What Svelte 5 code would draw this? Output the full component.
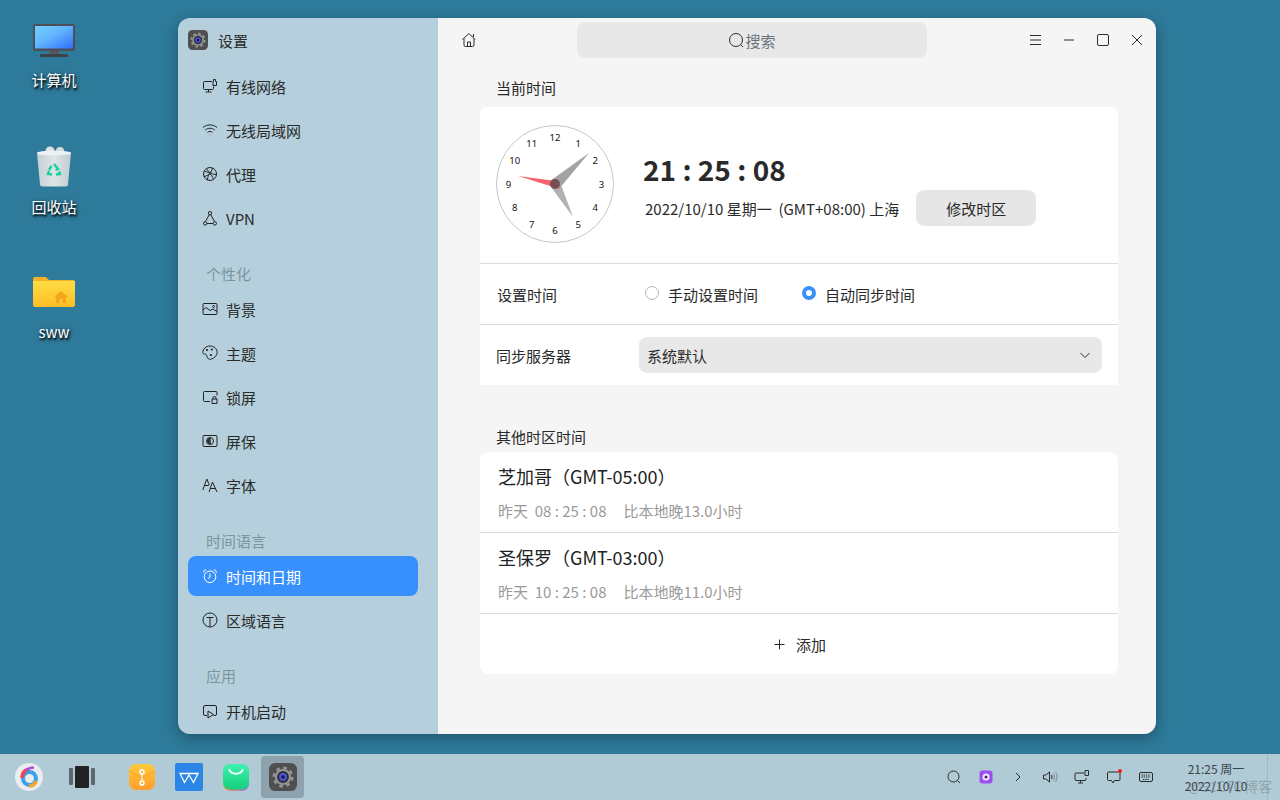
<script>
  const sections = [
    {
      items: [
        { label: "有线网络", icon: "M10 3.500H2.500a1 1 0 0 0-1 1v6a1 1 0 0 0 1 1h8a1 1 0 0 0 1-1V8.500M6.500 11.500V14M3.500 14h6M11.500 3.500V1.500h2v2h1v4h-3.500v-4z" },
        { label: "无线局域网", icon: "M1 5.500c4-3.400 10-3.400 14 0M3.200 8c2.800-2.300 6.800-2.300 9.600 0M5.400 10.300c1.500-1.100 3.700-1.100 5.200 0M8 12.800v.4" },
        { label: "代理", icon: "M8 1.500a6.500 6.500 0 1 0 0 13 6.500 6.500 0 0 0 0-13zM2.500 5.500c3.500 0 7 2 9 8M5 2.500c.5 3 4 6 9.500 6M10.500 2c-1 4-4 8-8.500 8.500M5.500 14c0-3 1-6 4-8" },
        { label: "VPN", icon: "M7.200 4.800L3.500 11.500M8.800 4.800l3.700 6.700M5 13.500h6M8 1.500a1.700 1.700 0 1 0 0 3.400 1.700 1.700 0 0 0 0-3.400zM3.200 11.700a1.700 1.700 0 1 0 0 3.400 1.700 1.700 0 0 0 0-3.400zM12.800 11.700a1.700 1.700 0 1 0 0 3.400 1.700 1.700 0 0 0 0-3.400z" }
      ]
    },
    {
      title: "个性化",
      items: [
        { label: "背景", icon: "M2 2.500h12a1 1 0 0 1 1 1v9a1 1 0 0 1-1 1H2a1 1 0 0 1-1-1v-9a1 1 0 0 1 1-1zM1 9l3-2.500 4 3 3-1.500 4 2.500M11.500 4.500a1 1 0 1 0 0 2 1 1 0 0 0 0-2z" },
        { label: "主题", icon: "M8 1C4 1 .8 4 .8 7.500c0 1.500 1.500 1.500 2.700 1.800 1.500.4 1.200 2 2 3.500.8 1.400 2.500 1.800 4 1.200 3-1 5.700-3.500 5.700-6.500C15.200 3.800 12 1 8 1z", dots: [[5, 5], [9.800, 4.500], [9, 10]] },
        { label: "锁屏", icon: "M15 6.500v-3a1 1 0 0 0-1-1H2.500a1 1 0 0 0-1 1v8a1 1 0 0 0 1 1H8M10 10h5v4.500h-5zM11 10V9a1.500 1.500 0 0 1 3 0v1" },
        { label: "屏保", icon: "M2 2.500h12a1 1 0 0 1 1 1v9a1 1 0 0 1-1 1H2a1 1 0 0 1-1-1v-9a1 1 0 0 1 1-1zM8 4.500a3.500 3.500 0 1 0 0 7 3.500 3.500 0 0 0 0-7zM8 4.500v7M8 5.500a2.500 2.500 0 0 0 0 5zM6.500 6v4" },
        { label: "字体", icon: "M.8 13L4.800 2l2.500 6M2.400 8.500h4.500M7 15l3.500-10 4.500 10M8.300 11.500h5.200" }
      ]
    },
    {
      title: "时间语言",
      items: [
        { label: "时间和日期", active: true, icon: "M8 3a5.800 5.800 0 1 0 0 11.600A5.800 5.800 0 0 0 8 3zM8 5.500V9l-2 1.500M1.800 4.800V3.500a1.500 1.500 0 0 1 1.500-1.500h1M14.200 4.800V3.500A1.500 1.500 0 0 0 12.700 2h-1" },
        { label: "区域语言", icon: "M8 1a7 7 0 1 0 0 14A7 7 0 0 0 8 1zM4.500 5.500h7M8 5.500V15" }
      ]
    },
    {
      title: "应用",
      items: [
        { label: "开机启动", icon: "M5 12.500H3a1.500 1.500 0 0 1-1.500-1.500V4A1.500 1.500 0 0 1 3 2.500h10A1.500 1.500 0 0 1 14.500 4v7a1.500 1.500 0 0 1-1.500 1.500h-1.500M6 8l5.500 3.500L6 15z" }
      ]
    }
  ];

  const clockNumbers = [1, 2, 3, 4, 5, 6, 7, 8, 9, 10, 11, 12].map((n) => {
    const a = (n * Math.PI) / 6;
    return { n, x: 46.5 * Math.sin(a), y: -46.5 * Math.cos(a) };
  });

  const zones = [
    { city: "芝加哥", gmt: "（GMT-05:00）", time: "08 : 25 : 08", diff: "比本地晚13.0小时" },
    { city: "圣保罗", gmt: "（GMT-03:00）", time: "10 : 25 : 08", diff: "比本地晚11.0小时" }
  ];
</script>

{#snippet gearIcon(size)}
  <svg width={size} height={size} viewBox="0 0 20 20">
    <rect width="20" height="20" rx="4.500" fill="#4f4f4f" />
    <circle cx="10" cy="10" r="5.800" fill="#969696" />
    <circle cx="10" cy="10" r="6.600" fill="none" stroke="#969696" stroke-width="1.800" stroke-dasharray="2.600 2.580" />
    <circle cx="10" cy="10" r="4.200" fill="#2d2d3a" />
    <circle cx="10" cy="10" r="2.800" fill="#4c55d8" />
    <circle cx="10" cy="10" r="1.200" fill="#12183f" />
  </svg>
{/snippet}

<div class="desktop">
  <div class="desk-icon computer">
    <svg width="48" height="40" viewBox="0 0 48 40">
      <defs>
        <linearGradient id="scr" x1="0" y1="0" x2="1" y2="1">
          <stop offset="0" stop-color="#6fd0fb" />
          <stop offset="0.45" stop-color="#62b4fd" />
          <stop offset="1" stop-color="#2e6ffd" />
        </linearGradient>
      </defs>
      <rect x="3" y="1" width="42" height="27" rx="2" fill="#4b5058" />
      <rect x="5" y="3" width="38" height="22.500" fill="url(#scr)" />
      <rect x="19" y="28" width="10" height="3" fill="#55585e" />
      <rect x="10" y="31" width="28" height="3" rx="1" fill="#3e4146" />
    </svg>
    <span>计算机</span>
  </div>
  <div class="desk-icon trash">
    <svg width="48" height="44" viewBox="0 0 48 44">
      <defs>
        <linearGradient id="bin" x1="0" y1="0" x2="1" y2="0">
          <stop offset="0" stop-color="#c4d0d5" />
          <stop offset="0.5" stop-color="#dde4e6" />
          <stop offset="1" stop-color="#bfccd1" />
        </linearGradient>
      </defs>
      <circle cx="20" cy="6" r="4.500" fill="#dfe3e4" />
      <circle cx="30" cy="6" r="4" fill="#d4d9da" />
      <path d="M7 7.500h34l-3 32q-.3 2-2 2H12q-1.700 0-2-2z" fill="url(#bin)" />
      <ellipse cx="24" cy="8" rx="17" ry="2.500" fill="#eef1f2" />
      <path d="M24 19l4 5-2.500 1M19 26l-1 3 4 .5M29 26.500l1 2.500-4 .5M21.500 21l-2.500 4" fill="none" stroke="#17d19a" stroke-width="2.400" />
    </svg>
    <span>回收站</span>
  </div>
  <div class="desk-icon home">
    <svg width="48" height="40" viewBox="0 0 48 40">
      <defs>
        <linearGradient id="fold" x1="0" y1="0" x2="0" y2="1">
          <stop offset="0" stop-color="#ffdc45" />
          <stop offset="1" stop-color="#ffbd24" />
        </linearGradient>
      </defs>
      <path d="M3 5q0-2 2-2h11l3 3h24q2 0 2 2v6H3z" fill="#f5b023" />
      <path d="M3 7h42v24q0 2-2 2H5q-2 0-2-2z" fill="url(#fold)" />
      <path d="M24 23l7-6 7 6h-2v6h-3.500v-4h-3v4H26v-6z" fill="#f4a51e" />
    </svg>
    <span>sww</span>
  </div>

  <div class="window">
    <aside class="sidebar">
      <div class="app-head">
        {@render gearIcon(20)}
        <span>设置</span>
      </div>
      {#each sections as section}
        <div class="section">
          {#if section.title}
            <div class="section-title">{section.title}</div>
          {/if}
          {#each section.items as item}
            <div class="nav-item" class:active={item.active}>
              <svg width="16" height="16" viewBox="0 0 16 16">
                <path d={item.icon} />
                {#if item.dots}
                  {#each item.dots as d}
                    <circle class="dot" cx={d[0]} cy={d[1]} r="1.100" />
                  {/each}
                {/if}
              </svg>
              <span>{item.label}</span>
            </div>
          {/each}
        </div>
      {/each}
    </aside>

    <main class="content">
      <header class="titlebar">
        <button class="home-btn" aria-label="主页">
          <svg width="16" height="16" viewBox="0 0 16 16">
            <path d="M1.500 7.500L8 1.500l6 6M3 6.500v6.500a1.500 1.500 0 0 0 1.500 1.500h7A1.500 1.500 0 0 0 13 13V6.500M6.500 14.500V10h3v4.500M12.500 2v3" />
          </svg>
        </button>
        <div class="search">
          <svg width="17" height="17" viewBox="0 0 17 17">
            <path d="M8 1.500a6.500 6.500 0 1 0 0 13 6.500 6.500 0 0 0 0-13zM12.800 12.800L15 15" />
          </svg>
          <span>搜索</span>
        </div>
        <div class="win-buttons">
          <svg width="12" height="12" viewBox="0 0 12 12"><path d="M1 1.500h11M1 6h11M1 10.500h11" /></svg>
          <svg width="12" height="12" viewBox="0 0 12 12"><path d="M1 6h10" /></svg>
          <svg width="12" height="12" viewBox="0 0 12 12"><rect x=".5" y=".5" width="11" height="11" rx="1.500" /></svg>
          <svg width="12" height="12" viewBox="0 0 12 12"><path d="M1 1l10 10M11 1L1 11" /></svg>
        </div>
      </header>

      <div class="scroll">
        <h2>当前时间</h2>
        <section class="card">
          <div class="now">
            <svg class="clock" width="120" height="120" viewBox="-60 -60 120 120">
              <circle r="58.500" fill="#fff" stroke="#c5c5c5" stroke-width="1" />
              {#each clockNumbers as c}
                <text x={c.x} y={c.y + 3.500}>{c.n}</text>
              {/each}
              <path d="M-5 -3 L34 -31 L4 5Z" fill="#8c8c8c" opacity="0.8" />
              <path d="M5 -2 L18 33 L-4 3Z" fill="#a5a5a5" opacity="0.85" />
              <path d="M-37 -8 L-3 -3.500 L5 5Z" fill="#f9525b" opacity="0.9" />
              <circle r="5" fill="#6b4a4c" opacity="0.9" />
            </svg>
            <div class="now-text">
              <div class="big-time">21 : 25 : 08</div>
              <div class="date-row">
                <span>2022/10/10 星期一&nbsp;&nbsp;(GMT+08:00) 上海</span>
                <button class="btn">修改时区</button>
              </div>
            </div>
          </div>
          <div class="row set-row">
            <span class="row-label">设置时间</span>
            <label class="radio"><i></i>手动设置时间</label>
            <label class="radio on"><i></i>自动同步时间</label>
          </div>
          <div class="row server-row">
            <span class="row-label">同步服务器</span>
            <div class="select">
              <span>系统默认</span>
              <svg width="12" height="12" viewBox="0 0 12 12"><path d="M1.500 4l4.500 4.500L10.500 4" /></svg>
            </div>
          </div>
        </section>

        <h2 class="other">其他时区时间</h2>
        <section class="card zones">
          {#each zones as z}
            <div class="zone">
              <div class="zone-name">{z.city}<span class="gmt">{z.gmt}</span></div>
              <div class="zone-info"><span>昨天&nbsp;&nbsp;{z.time}</span><span>{z.diff}</span></div>
            </div>
          {/each}
          <div class="add">
            <svg width="11" height="11" viewBox="0 0 11 11"><path d="M.5 5.500h10M5.500 .5v10" /></svg>
            <span>添加</span>
          </div>
        </section>
      </div>
    </main>
  </div>

  <footer class="taskbar">
    <div class="dock-left">
      <svg class="launcher" width="30" height="30" viewBox="0 0 30 30">
        <circle cx="15" cy="15" r="14" fill="#e9edf0" />
        <circle cx="15.500" cy="16.500" r="6.500" fill="none" stroke="#3da2ec" stroke-width="4" />
        <path d="M8 16c0-5 3-8 7-9" fill="none" stroke="#e8484f" stroke-width="3.500" />
        <path d="M12 9c2-2.500 4-3.500 8-3.500" fill="none" stroke="#a652e0" stroke-width="2.500" />
        <path d="M22 19c-1 4-4 5-7 5" fill="none" stroke="#f6a52d" stroke-width="3.500" />
      </svg>
      <svg class="multi" width="26" height="24" viewBox="0 0 26 24">
        <rect x="0" y="3" width="4" height="17" rx="1" fill="#5e676d" />
        <rect x="6" y="1" width="14" height="22" rx="1" fill="#232323" />
        <rect x="22" y="3" width="4" height="17" rx="1" fill="#5e676d" />
      </svg>
      <div class="dock-apps">
        <div class="dock-app">
          <svg width="28" height="28" viewBox="0 0 28 28">
            <defs>
              <linearGradient id="arch" x1="0" y1="0" x2="0" y2="1">
                <stop offset="0" stop-color="#ffc93a" />
                <stop offset="1" stop-color="#ff9f2c" />
              </linearGradient>
            </defs>
            <rect x="1" y="1" width="26" height="26" rx="7" fill="url(#arch)" />
            <path d="M1 8l13 7 13-7" fill="none" stroke="#f6a02f" stroke-width="1" />
            <path d="M14 6v17" stroke="#fff" stroke-width="1.200" />
            <circle cx="14" cy="9" r="2" fill="#ffb535" stroke="#fff" stroke-width="1.400" />
            <circle cx="14" cy="20" r="2" fill="#ffb535" stroke="#fff" stroke-width="1.400" />
          </svg>
        </div>
        <div class="dock-app">
          <svg width="28" height="28" viewBox="0 0 28 28">
            <rect width="28" height="28" rx="2" fill="#2b86e7" />
            <path d="M5 10.500h18l-4.500 9-4.500-7.500-4.500 7.500z" fill="none" stroke="#fff" stroke-width="1.300" />
          </svg>
        </div>
        <div class="dock-app">
          <svg width="28" height="28" viewBox="0 0 28 28">
            <defs>
              <linearGradient id="shop" x1="0" y1="0" x2="0" y2="1">
                <stop offset="0" stop-color="#3ef2ad" />
                <stop offset="1" stop-color="#15cf7c" />
              </linearGradient>
              <linearGradient id="shop-edge" x1="0" y1="0" x2="1" y2="0">
                <stop offset="0" stop-color="#f0a040" />
                <stop offset="1" stop-color="#9a6cf0" />
              </linearGradient>
            </defs>
            <rect x="1" y="2" width="26" height="26" rx="7" fill="url(#shop-edge)" />
            <rect x="1" y="1" width="26" height="25.500" rx="7" fill="url(#shop)" />
            <path d="M7.500 7c2 5 11 5 13 0" fill="none" stroke="#fff" stroke-width="2" stroke-linecap="round" />
          </svg>
        </div>
        <div class="dock-app current">
          {@render gearIcon(28)}
        </div>
      </div>
    </div>
    <div class="dock-right">
      <div class="tray">
        <svg width="16" height="16" viewBox="0 0 16 16"><path d="M7.500 2a5.500 5.500 0 1 0 0 11 5.500 5.500 0 0 0 0-11zM11.500 11.500L14 14" /></svg>
        <svg width="16" height="16" viewBox="0 0 16 16">
          <rect x="1.500" y="1.500" width="13" height="13" rx="3" fill="#9a4ff0" stroke="none" />
          <circle cx="8" cy="8" r="3.500" fill="#f3e9ff" stroke="none" />
          <circle cx="8" cy="8" r="1.500" fill="#45206f" stroke="none" />
        </svg>
        <svg width="16" height="16" viewBox="0 0 16 16"><path d="M6 4l4 4-4 4" /></svg>
        <svg width="16" height="16" viewBox="0 0 16 16">
          <path d="M1.500 6v4h2.500L7.500 13V3L4 6zM9.500 6c.7 1.200.7 2.800 0 4" />
          <path class="faint" d="M11.500 4.500c1.300 2 1.300 5 0 7M13.500 3c2 3 2 7 0 10" />
        </svg>
        <svg width="16" height="16" viewBox="0 0 16 16"><path d="M10 4H2a1 1 0 0 0-1 1v5.500a1 1 0 0 0 1 1h9a1 1 0 0 0 1-1V9M6.500 11.500V14M4 14h5M11 1.500h3.500v5H11z" /></svg>
        <div class="notify">
          <svg width="16" height="16" viewBox="0 0 16 16"><path d="M14 3v7.500a1 1 0 0 1-1 1H8.500L7 14l-1.500-2.500H2.500a1 1 0 0 1-1-1V4a1 1 0 0 1 1-1z" /></svg>
          <i></i>
        </div>
        <svg width="16" height="16" viewBox="0 0 16 16">
          <rect x="1.500" y="3.500" width="13" height="9" rx="1.500" />
          <path d="M3.500 6h9M3.500 8h9M5 10.500h6" stroke-dasharray="1.400 .8" />
        </svg>
      </div>
      <div class="clock-text">
        <span>21:25 周一</span>
        <span>2022/10/10</span>
        <span class="watermark">@51CTO博客</span>
      </div>
      <div class="show-desktop"></div>
    </div>
  </footer>
</div>

<style>
  :global(body) {
    margin: 0;
    font-family: "Noto Sans CJK SC", "Noto Sans", sans-serif;
  }

  .desktop {
    position: relative;
    width: 1280px;
    height: 800px;
    overflow: hidden;
    background: #2e7a9a;
  }

  .desk-icon {
    position: absolute;
    left: 5px;
    width: 98px;
    display: flex;
    flex-direction: column;
    align-items: center;
    color: #fff;
    font-size: 15px;
    line-height: 20px;
    text-shadow: 1px 2px 2px rgba(0, 0, 0, 0.9), 1px 1px 4px rgba(0, 0, 0, 0.6);
  }

  .computer {
    top: 23px;
    gap: 7px;
  }

  .trash {
    top: 145px;
    gap: 8px;
  }

  .home {
    top: 274px;
    gap: 8px;
  }

  .window {
    position: absolute;
    left: 178px;
    top: 18px;
    width: 978px;
    height: 716px;
    display: flex;
    border-radius: 12px;
    overflow: hidden;
    box-shadow: 0 4px 14px rgba(0, 0, 0, 0.3);
  }

  .sidebar {
    width: 260px;
    flex: none;
    box-sizing: border-box;
    padding: 0 20px 0 10px;
    background: #b5d0dc;
    color: #2a2a2a;
  }

  .app-head {
    height: 44px;
    display: flex;
    align-items: center;
    gap: 10px;
    font-size: 15px;
  }

  .section {
    margin-bottom: 25px;
  }

  .section-title {
    height: 22px;
    line-height: 22px;
    padding-left: 18px;
    font-size: 15px;
    color: #7d949e;
  }

  .nav-item {
    height: 40px;
    margin-top: 4px;
    display: flex;
    align-items: center;
    gap: 8px;
    padding-left: 14px;
    border-radius: 8px;
    font-size: 15px;
  }

  .nav-item svg {
    fill: none;
    stroke: #222;
    stroke-width: 1;
  }

  .nav-item .dot {
    fill: #222;
    stroke: none;
  }

  .nav-item.active {
    background: #3790fc;
    color: #fff;
  }

  .nav-item.active svg {
    stroke: #fff;
  }

  .content {
    flex: 1;
    display: flex;
    flex-direction: column;
    background: #f5f5f5;
    color: #2a2a2a;
  }

  .titlebar {
    position: relative;
    height: 44px;
    flex: none;
    display: flex;
    align-items: center;
    justify-content: center;
    padding-right: 90px;
  }

  .home-btn {
    position: absolute;
    left: 23px;
    top: 14px;
    padding: 0;
    border: 0;
    background: none;
    display: flex;
  }

  .home-btn svg {
    fill: none;
    stroke: #2a2a2a;
    stroke-width: 1;
  }

  .search {
    width: 350px;
    height: 36px;
    border-radius: 8px;
    background: #e8e8e8;
    display: flex;
    align-items: center;
    justify-content: center;
    font-size: 15px;
    color: #6b7378;
  }

  .search svg {
    fill: none;
    stroke: #2a2a2a;
    stroke-width: 1;
  }

  .win-buttons {
    position: absolute;
    right: 13px;
    top: 16px;
    display: flex;
    align-items: center;
    gap: 22px;
  }

  .win-buttons svg {
    fill: none;
    stroke: #2a2a2a;
    stroke-width: 1;
  }

  .scroll {
    padding: 0 38px 0 42px;
  }

  h2 {
    margin: 0;
    height: 45px;
    padding: 14px 0 0 16px;
    box-sizing: border-box;
    font-size: 15px;
    line-height: 24px;
    font-weight: 400;
  }

  h2.other {
    height: 37px;
    margin-top: 30px;
    padding-top: 0;
    line-height: 44px;
    overflow: hidden;
  }

  .card {
    background: #fff;
    border-radius: 8px 8px 0 0;
    font-size: 15px;
  }

  .now {
    height: 154px;
    padding: 0 0 2px 15px;
    display: flex;
    align-items: center;
    gap: 28px;
    border-bottom: 1px solid #dcdcdc;
  }

  .clock text {
    font-size: 9.5px;
    fill: #111;
    text-anchor: middle;
    font-family: "Noto Sans", sans-serif;
  }

  .big-time {
    font-size: 28px;
    line-height: 38px;
    font-weight: 700;
    margin: 8px 0 2px;
    color: #2a2a2a;
  }

  .date-row {
    display: flex;
    align-items: center;
    gap: 17px;
    padding-left: 2px;
    font-size: 15px;
  }

  .btn {
    width: 120px;
    height: 36px;
    border: 0;
    border-radius: 8px;
    background: #e6e6e6;
    color: #2a2a2a;
    font: inherit;
  }

  .row {
    display: flex;
    align-items: center;
  }

  .set-row {
    height: 60px;
    border-bottom: 1px solid #dcdcdc;
    padding-left: 17px;
  }

  .row-label {
    width: 148px;
  }

  .radio {
    display: flex;
    align-items: center;
    gap: 9px;
    margin-right: 44px;
  }

  .radio i {
    box-sizing: border-box;
    width: 14px;
    height: 14px;
    border: 1px solid #b5b5b5;
    border-radius: 50%;
    background: #fff;
    margin-top: -2px;
  }

  .radio.on i {
    border: 4.500px solid #3790fc;
  }

  .server-row {
    height: 60px;
    padding: 0 16px;
  }

  .server-row .row-label {
    width: 143px;
  }

  .select {
    flex: 1;
    height: 36px;
    border-radius: 8px;
    background: #e8e8e8;
    display: flex;
    align-items: center;
    justify-content: space-between;
    padding: 0 11px 0 8px;
  }

  .select svg {
    fill: none;
    stroke: #2a2a2a;
    stroke-width: 1;
  }

  .zones {
    border-radius: 8px;
  }

  .zone {
    height: 80px;
    padding-left: 18px;
    border-bottom: 1px solid #dcdcdc;
  }

  .zone-name {
    font-size: 18px;
    line-height: 26px;
    padding-top: 11px;
    color: #222;
  }

  .zone-info {
    margin-top: 10px;
    display: flex;
    gap: 17px;
    color: #9a9a9a;
    font-size: 15px;
    line-height: 24px;
  }

  .add {
    height: 60px;
    display: flex;
    align-items: center;
    justify-content: center;
    gap: 11px;
    padding-left: 2px;
  }

  .add svg {
    fill: none;
    stroke: #2a2a2a;
    stroke-width: 1;
  }

  .taskbar {
    position: absolute;
    left: 0;
    right: 0;
    bottom: 0;
    height: 46px;
    display: flex;
    justify-content: space-between;
    background: #b0cbd6;
  }

  .dock-left {
    display: flex;
    align-items: center;
  }

  .launcher {
    margin-left: 14px;
  }

  .multi {
    margin-left: 25px;
  }

  .dock-apps {
    display: flex;
    margin-left: 25px;
    gap: 4px;
  }

  .dock-app {
    width: 43px;
    height: 42px;
    display: flex;
    align-items: center;
    justify-content: center;
    border-radius: 4px;
  }

  .dock-app.current {
    background: rgba(60, 70, 75, 0.3);
  }

  .dock-right {
    display: flex;
    align-items: center;
  }

  .tray {
    display: flex;
    align-items: center;
    gap: 16px;
    color: #2a2a2a;
    margin-right: 27px;
  }

  .tray svg {
    fill: none;
    stroke: #2a2a2a;
    stroke-width: 1;
    display: block;
  }

  .tray .faint {
    stroke: #7d8b92;
  }

  .notify {
    position: relative;
  }

  .notify i {
    position: absolute;
    right: 0;
    top: 0;
    width: 4px;
    height: 4px;
    border-radius: 50%;
    background: #f0211c;
  }

  .clock-text {
    position: relative;
    width: 70px;
    margin-right: 16px;
    display: flex;
    flex-direction: column;
    align-items: center;
    font-size: 12px;
    line-height: 17px;
    color: #3a4449;
  }

  .watermark {
    position: absolute;
    right: -21px;
    top: 18px;
    white-space: nowrap;
    color: rgba(90, 100, 105, 0.4);
    font-size: 14px;
  }

  .show-desktop {
    width: 12px;
    height: 100%;
    border-left: 1px solid #a0b9c4;
  }
</style>
